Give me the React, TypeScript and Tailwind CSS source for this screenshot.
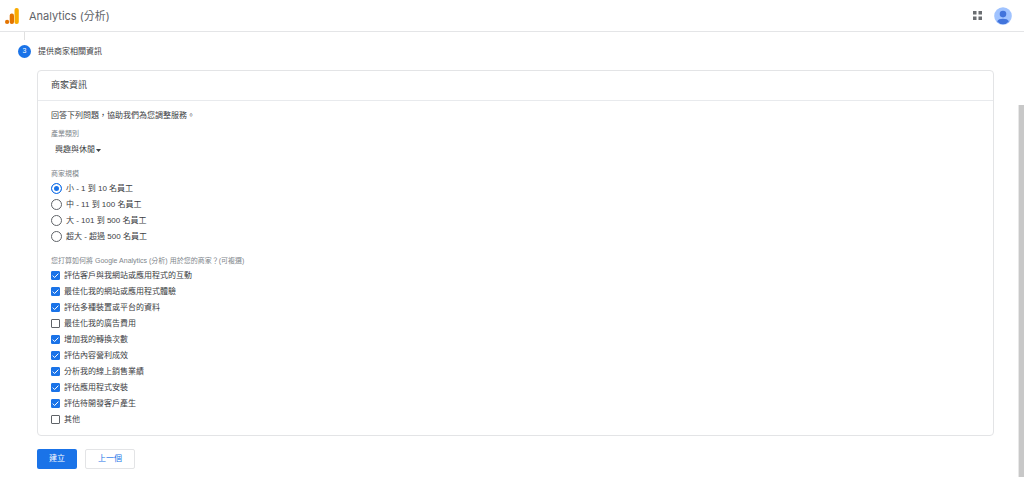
import { useState } from "react";

type Option = {
  id: string;
  label: string;
};

const companySizes: Option[] = [
  { id: "small", label: "小 - 1 到 10 名員工" },
  { id: "medium", label: "中 - 11 到 100 名員工" },
  { id: "large", label: "大 - 101 到 500 名員工" },
  { id: "xlarge", label: "超大 - 超過 500 名員工" },
];

const goals: Option[] = [
  { id: "engagement", label: "評估客戶與我網站或應用程式的互動" },
  { id: "experience", label: "最佳化我的網站或應用程式體驗" },
  { id: "cross-device", label: "評估多種裝置或平台的資料" },
  { id: "ad-cost", label: "最佳化我的廣告費用" },
  { id: "conversions", label: "增加我的轉換次數" },
  { id: "monetization", label: "評估內容營利成效" },
  { id: "online-sales", label: "分析我的線上銷售業績" },
  { id: "installs", label: "評估應用程式安裝" },
  { id: "leads", label: "評估待開發客戶產生" },
  { id: "other", label: "其他" },
];

const AnalyticsLogo = () => (
  <svg className="h-4 w-[14px]" viewBox="0 0 14 16" aria-hidden="true">
    <rect x="9.5" y="0" width="4.3" height="16" rx="2" fill="#f9ab00" />
    <rect x="4.7" y="5.6" width="4.3" height="10.4" rx="2" fill="#e37400" />
    <circle cx="2.1" cy="13.9" r="2.1" fill="#e37400" />
  </svg>
);

const Header = () => (
  <header className="flex h-8 items-center border-b border-[#e4e5e7] pr-3 pl-[5px]">
    <AnalyticsLogo />
    <h1 className="ml-[10px] font-['Inter','Noto_Sans_CJK_TC',sans-serif] text-[11px] leading-4 text-[#5f6368]">
      Analytics (分析)
    </h1>
    <button type="button" aria-label="應用程式" className="ml-auto">
      <svg className="h-[9px] w-[9px]" viewBox="0 0 9 9" fill="#6b6e72">
        <rect width="3.5" height="3.5" />
        <rect x="5.5" width="3.5" height="3.5" />
        <rect y="5.5" width="3.5" height="3.5" />
        <rect x="5.5" y="5.5" width="3.5" height="3.5" />
      </svg>
    </button>
    <button type="button" aria-label="帳戶" className="ml-3">
      <svg className="h-[18px] w-[18px]" viewBox="0 0 18 18">
        <circle cx="9" cy="9" r="8.8" fill="#a0c3ff" />
        <circle cx="9" cy="7.1" r="3.3" fill="#4274dc" />
        <path d="M3.2 14.4C3.8 12.4 6.2 11.7 9 11.7s5.2.7 5.8 2.7A8 8 0 0 1 9 17.2a8 8 0 0 1-5.8-2.8z" fill="#4274dc" />
      </svg>
    </button>
  </header>
);

const App = () => {
  const [size, setSize] = useState("small");
  const [selected, setSelected] = useState<string[]>(
    goals.map((goal) => goal.id).filter((id) => id !== "ad-cost" && id !== "other"),
  );

  const toggleGoal = (id: string) => {
    setSelected((current) =>
      current.includes(id) ? current.filter((item) => item !== id) : [...current, id],
    );
  };

  return (
    <div
      lang="zh-Hant"
      className="flex min-h-screen flex-col bg-white font-['Liberation_Sans','Noto_Sans_CJK_TC',sans-serif] text-[8px] leading-4 text-[#3c4043]"
    >
      <Header />

      <div className="flex flex-1">
        <main className="min-w-0 flex-1 pr-6 pb-2 pl-[18px]">
          {/* Current step */}
          <div className="ml-[6px] h-2 w-px bg-[#e0e0e0]" />
          <div className="mt-[3px] flex h-4 items-center gap-[7px]">
            <span className="flex h-[13px] w-[13px] items-center justify-center rounded-full bg-[#1a73e8] text-[7px] text-white">
              3
            </span>
            <h2 className="pt-0.5">提供商家相關資訊</h2>
          </div>

          <form className="ml-[19px]" onSubmit={(event) => event.preventDefault()}>
            <section className="mt-[11px] rounded-[4px] border border-[#e3e4e6]">
              <h3 className="border-b border-[#e8eaed] px-[13px] py-[6px] text-[9px] leading-[17px]">
                商家資訊
              </h3>

              <div className="px-[13px] pt-[7px] pb-2">
                <p>回答下列問題，協助我們為您調整服務。</p>

                <label htmlFor="industry" className="mt-[5px] block text-[7px] leading-[10px] text-[#80868b]">
                  產業類別
                </label>
                <div className="mt-[3px] flex items-center pl-1">
                  <select
                    id="industry"
                    defaultValue="hobbies"
                    className="field-sizing-content h-4 appearance-none bg-transparent"
                  >
                    <option value="hobbies">興趣與休閒</option>
                  </select>
                  <svg className="ml-px h-[3px] w-[5px]" viewBox="0 0 5 3" aria-hidden="true">
                    <path d="M0 0h5L2.5 3z" fill="#3c4043" />
                  </svg>
                </div>

                <fieldset className="mt-[11px]">
                  <legend className="mb-px text-[7px] leading-[10px] text-[#80868b]">商家規模</legend>
                  {companySizes.map((option) => (
                    <label key={option.id} className="flex h-4 w-fit items-center gap-1">
                      <input
                        type="radio"
                        name="size"
                        checked={size === option.id}
                        onChange={() => setSize(option.id)}
                        className="h-[11px] w-[11px] appearance-none rounded-full border border-[#5f6368] checked:border-[#1a73e8] checked:bg-[#1a73e8] checked:inset-ring-2 checked:inset-ring-white"
                      />
                      <span className="pt-0.5">{option.label}</span>
                    </label>
                  ))}
                </fieldset>

                <fieldset className="mt-3">
                  <legend className="mb-px text-[7px] leading-[10px] text-[#80868b]">
                    您打算如何將 Google Analytics (分析) 用於您的商家？(可複選)
                  </legend>
                  {goals.map((goal) => (
                    <label key={goal.id} className="flex h-4 w-fit items-center gap-1">
                      <span className="grid">
                        <input
                          type="checkbox"
                          checked={selected.includes(goal.id)}
                          onChange={() => toggleGoal(goal.id)}
                          className="peer col-start-1 row-start-1 h-[9px] w-[9px] appearance-none rounded-[1px] border border-[#5f6368] checked:border-[#1a73e8] checked:bg-[#1a73e8]"
                        />
                        <svg
                          className="pointer-events-none invisible col-start-1 row-start-1 h-[9px] w-[9px] peer-checked:visible"
                          viewBox="0 0 9 9"
                          fill="none"
                          stroke="#fff"
                        >
                          <path d="M1.7 4.6l1.9 1.9 3.8-3.9" />
                        </svg>
                      </span>
                      <span className="pt-0.5">{goal.label}</span>
                    </label>
                  ))}
                </fieldset>
              </div>
            </section>

            <div className="mt-[13px] flex gap-2">
              <button type="submit" className="rounded-[2px] bg-[#1a73e8] px-3 py-[2px] text-white">
                建立
              </button>
              <button type="button" className="rounded-[2px] border border-[#e3e4e6] px-3 py-px text-[#1a73e8]">
                上一個
              </button>
            </div>
          </form>
        </main>

        {/* Scrollbar thumb */}
        <div className="mt-[73px] w-[6px] border-l border-[#e8e8e8] bg-[#c8c8c8]" />
      </div>
    </div>
  );
};

export default App;
